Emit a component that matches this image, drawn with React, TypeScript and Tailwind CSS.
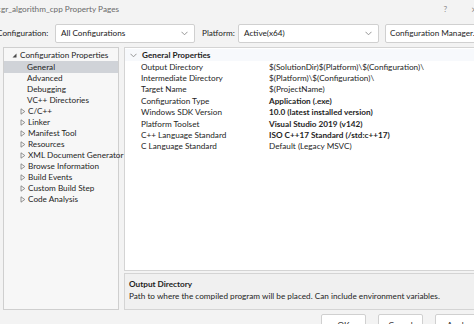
import type { ReactNode } from "react";

const treeItems: { label: string; expandable?: boolean }[] = [
  { label: "Advanced" },
  { label: "Debugging" },
  { label: "VC++ Directories" },
  { label: "C/C++", expandable: true },
  { label: "Linker", expandable: true },
  { label: "Manifest Tool", expandable: true },
  { label: "Resources", expandable: true },
  { label: "XML Document Generator", expandable: true },
  { label: "Browse Information", expandable: true },
  { label: "Build Events", expandable: true },
  { label: "Custom Build Step", expandable: true },
  { label: "Code Analysis", expandable: true },
];

const props: { name: string; value: string; bold?: boolean }[] = [
  { name: "Output Directory", value: "$(SolutionDir)$(Platform)\\$(Configuration)\\" },
  { name: "Intermediate Directory", value: "$(Platform)\\$(Configuration)\\" },
  { name: "Target Name", value: "$(ProjectName)" },
  { name: "Configuration Type", value: "Application (.exe)", bold: true },
  { name: "Windows SDK Version", value: "10.0 (latest installed version)", bold: true },
  { name: "Platform Toolset", value: "Visual Studio 2019 (v142)", bold: true },
  { name: "C++ Language Standard", value: "ISO C++17 Standard (/std:c++17)", bold: true },
  { name: "C Language Standard", value: "Default (Legacy MSVC)" },
];

function Chevron() {
  return (
    <svg width="7" height="5" viewBox="0 0 7 5" className="shrink-0">
      <path d="M0.5 0.8 L3.5 3.8 L6.5 0.8" fill="none" stroke="#8a8a8a" strokeWidth="0.9" />
    </svg>
  );
}

function Dropdown({ children, width }: { children: ReactNode; width: string }) {
  return (
    <div className={`${width} h-[19px] bg-white border border-[#d0d0d0] rounded-[2px] flex items-center justify-between pl-[5px] pr-[6px]`}>
      <span className="text-[#1a1a1a]">{children}</span>
      <Chevron />
    </div>
  );
}

function Expander() {
  return (
    <svg width="6" height="7" viewBox="0 0 6 7" className="shrink-0">
      <path d="M1 0.8 L4.8 3.5 L1 6.2 Z" fill="none" stroke="#7a7a7a" strokeWidth="0.8" />
    </svg>
  );
}

export default function App() {
  return (
    <div
      className="w-[474px] h-[324px] overflow-hidden bg-[#f3f3f3] flex flex-col text-[8.2px] text-[#1e1e1e] leading-none"
      style={{ fontFamily: 'Lato, "Liberation Sans", sans-serif' }}
    >
      {/* title bar */}
      <div className="h-[18px] flex items-center justify-between shrink-0">
        <span className="-ml-[3px] text-[#6b6b6b]">cgr_algorithm_cpp Property Pages</span>
        <div className="flex items-center gap-[24px] text-[#8a8a8a] -mr-[3px]">
          <span>?</span>
          <span className="text-[10px]">×</span>
        </div>
      </div>

      {/* configuration row */}
      <div className="h-[28px] flex items-center shrink-0 mt-[1px]">
        <span className="-ml-[3px] w-[58px] shrink-0">Configuration:</span>
        <Dropdown width="w-[140px]">All Configurations</Dropdown>
        <span className="ml-[7px] w-[36px] shrink-0">Platform:</span>
        <Dropdown width="w-[141px]">Active(x64)</Dropdown>
        <div className="ml-[6px] h-[19px] flex-1 -mr-[4px] bg-white border border-[#d0d0d0] rounded-[2px] flex items-center pl-[4px] whitespace-nowrap overflow-hidden">
          Configuration Manager...
        </div>
      </div>

      <div className="flex flex-1 min-h-0 pl-[3px] gap-[5px]">
        {/* tree */}
        <div className="w-[116px] h-[263px] bg-[#f7f7f7] border border-[#cfcfcf] pt-[2px] flex flex-col">
          <div className="h-[11px] flex items-center pl-[8px] gap-[3px] whitespace-nowrap">
            <svg width="5" height="5" viewBox="0 0 5 5" className="shrink-0">
              <path d="M4.5 0.5 L4.5 4.5 L0.5 4.5 Z" fill="#4a4a4a" />
            </svg>
            <span>Configuration Properties</span>
          </div>
          <div className="h-[12px] flex items-center pl-[23px] bg-[#d0d3d8]">General</div>
          {treeItems.map((it) => (
            <div key={it.label} className="h-[11px] flex items-center whitespace-nowrap">
              {it.expandable ? (
                <div className="pl-[16px] flex items-center gap-[2px]">
                  <Expander />
                  <span>{it.label}</span>
                </div>
              ) : (
                <span className="pl-[23px]">{it.label}</span>
              )}
            </div>
          ))}
        </div>

        {/* right side */}
        <div className="flex-1 flex flex-col h-[263px]">
          <div className="h-[224px] bg-white border border-[#d4d4d4] border-r-0 flex flex-col pt-[1px]">
            <div className="h-[12px] flex items-center pl-[5px] gap-[5px] bg-[#f7f9fc]">
              <Chevron />
              <span className="font-bold">General Properties</span>
            </div>
            {props.map((p) => (
              <div key={p.name} className="h-[11.4px] flex items-center whitespace-nowrap">
                <span className="w-[144px] pl-[16px] shrink-0">{p.name}</span>
                <span className={p.bold ? "font-bold" : ""}>{p.value}</span>
              </div>
            ))}
          </div>
          <div className="mt-[2px] h-[37px] bg-[#f0f0f0] border border-[#d4d4d4] border-r-0 pl-[4px] pt-[6px] flex flex-col gap-[4px]">
            <span className="font-bold">Output Directory</span>
            <span>Path to where the compiled program will be placed. Can include environment variables.</span>
          </div>
        </div>
      </div>

      {/* buttons */}
      <div className="h-[10px] shrink-0 flex justify-end gap-[12px] -mr-[6px] overflow-hidden">
        <div className="w-[45px] h-[19px] bg-white border border-[#d0d0d0] rounded-[2px] flex justify-center pt-[6px]">OK</div>
        <div className="w-[45px] h-[19px] bg-white border border-[#d0d0d0] rounded-[2px] flex justify-center pt-[6px]">Cancel</div>
        <div className="w-[45px] h-[19px] bg-white border border-[#d0d0d0] rounded-[2px] flex justify-center pt-[6px]">Apply</div>
      </div>
    </div>
  );
}
